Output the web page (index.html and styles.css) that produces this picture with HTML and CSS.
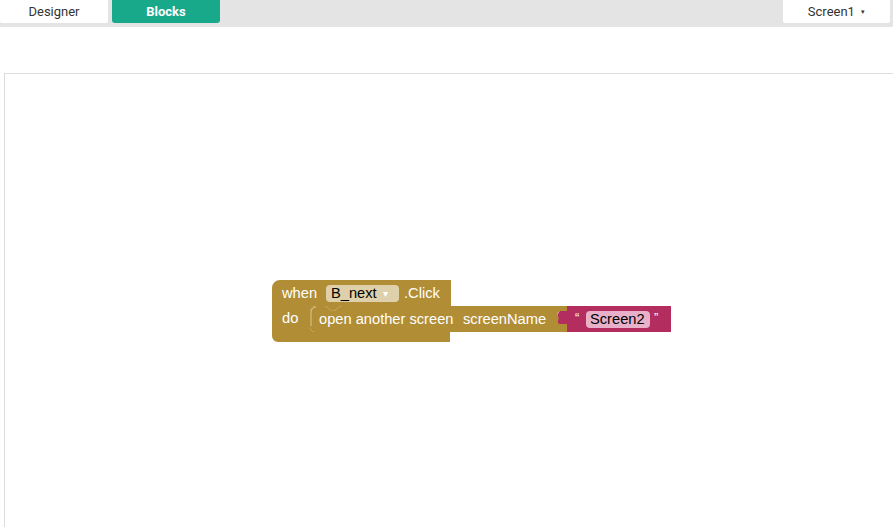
FILE: index.html
```html
<!DOCTYPE html>
<html>
<head>
<meta charset="utf-8">
<link rel="stylesheet" href="styles.css">
</head>
<body>
<div class="topbar">
  <div class="tabs">
    <div class="tab">Designer</div>
    <div class="tab active">Blocks</div>
  </div>
  <div class="screen-btn">Screen1 <span class="caret">▾</span></div>
</div>
<div class="workspace">
  <div class="canvas">
    <svg class="blocks" width="420" height="80" viewBox="270 276 420 80">
      <!-- event block -->
      <path d="M272,288 A8,8 0 0 1 280,280 H451 V306 H342 C338,306 336,311 333,311 C330,311 328,306 324,306 H316 A6,6 0 0 0 310,312 V327 A5,5 0 0 0 315,332 H450 V342 H278 A6,6 0 0 1 272,336 Z" fill="#b18e35"/>
      <!-- statement block -->
      <path d="M310,312 A6,6 0 0 1 316,306 H324 C328,306 330,311 333,311 C336,311 338,306 342,306 H567 V311 H561 C557,311 557,315 559,317 C561,319 561,322 558,323 H567 V332 H315 A5,5 0 0 1 310,327 Z" fill="#b18e35"/>
      <path d="M311,326 V313 A6,6 0 0 1 316,307" fill="none" stroke="#d9c594" stroke-width="1"/>
      <!-- text block -->
      <path d="M567,306 H671 V332 H567 V324 H559 C557,322 558,320 559,318 C557,316 558,312 560,311 H567 Z" fill="#b32d5e"/>
      <!-- fields -->
      <rect x="326" y="285" width="73" height="17" rx="4" fill="#ddd0ab"/>
      <rect x="586" y="311" width="64" height="17" rx="4" fill="#e8b1c9"/>
      <g class="btext">
        <text x="282" y="298">when</text>
        <text x="331" y="298" class="dark">B_next</text>
        <text x="383" y="297" class="arrow">▾</text>
        <text x="404" y="298">.Click</text>
        <text x="282" y="323">do</text>
        <text x="319" y="324">open another screen</text>
        <text x="463" y="324">screenName</text>
        <text x="575" y="322" class="quote">“</text>
        <text x="590" y="324" class="dark">Screen2</text>
        <text x="654" y="322" class="quote">”</text>
      </g>
    </svg>
  </div>
</div>
</body>
</html>
```
FILE: styles.css
```css
html, body {
  margin: 0;
  padding: 0;
  background: #ffffff;
  overflow: hidden;
}
body {
  width: 893px;
  height: 527px;
  font-family: Roboto, "Liberation Sans", sans-serif;
}
.topbar {
  height: 27px;
  background: #e5e4e5;
  display: flex;
  justify-content: space-between;
  align-items: flex-start;
}
.tabs {
  display: flex;
  gap: 4px;
}
.tab {
  width: 108px;
  height: 23px;
  background: #ffffff;
  color: #333333;
  font-size: 13px;
  line-height: 23px;
  text-align: center;
  border-radius: 0 0 2px 2px;
}
.tab.active {
  background: #18a98b;
  color: #ffffff;
  font-weight: 700;
  border-radius: 0 0 3px 3px;
}
.screen-btn {
  width: 107px;
  height: 23px;
  margin-right: 3px;
  background: #ffffff;
  color: #333333;
  font-size: 13px;
  line-height: 23px;
  text-align: center;
  border-radius: 0 0 2px 2px;
}
.caret {
  font-size: 7px;
  margin-left: 3px;
  position: relative;
  top: -2px;
}
.workspace {
  padding: 46px 0 0 4px;
}
.canvas {
  position: relative;
  height: 460px;
  width: 900px;
  border-top: 1px solid #dcdcdc;
  border-left: 1px solid #dcdcdc;
  background: #ffffff;
}
.blocks {
  position: absolute;
  left: 265px;
  top: 202px;
}
.btext text {
  font-family: "Liberation Sans", Arial, sans-serif;
  font-size: 14.67px;
  fill: #ffffff;
}
.btext text.dark {
  fill: #000000;
}
.btext text.arrow {
  font-size: 10px;
  fill: #ffffff;
}
.btext text.quote {
  font-size: 13px;
}
```
